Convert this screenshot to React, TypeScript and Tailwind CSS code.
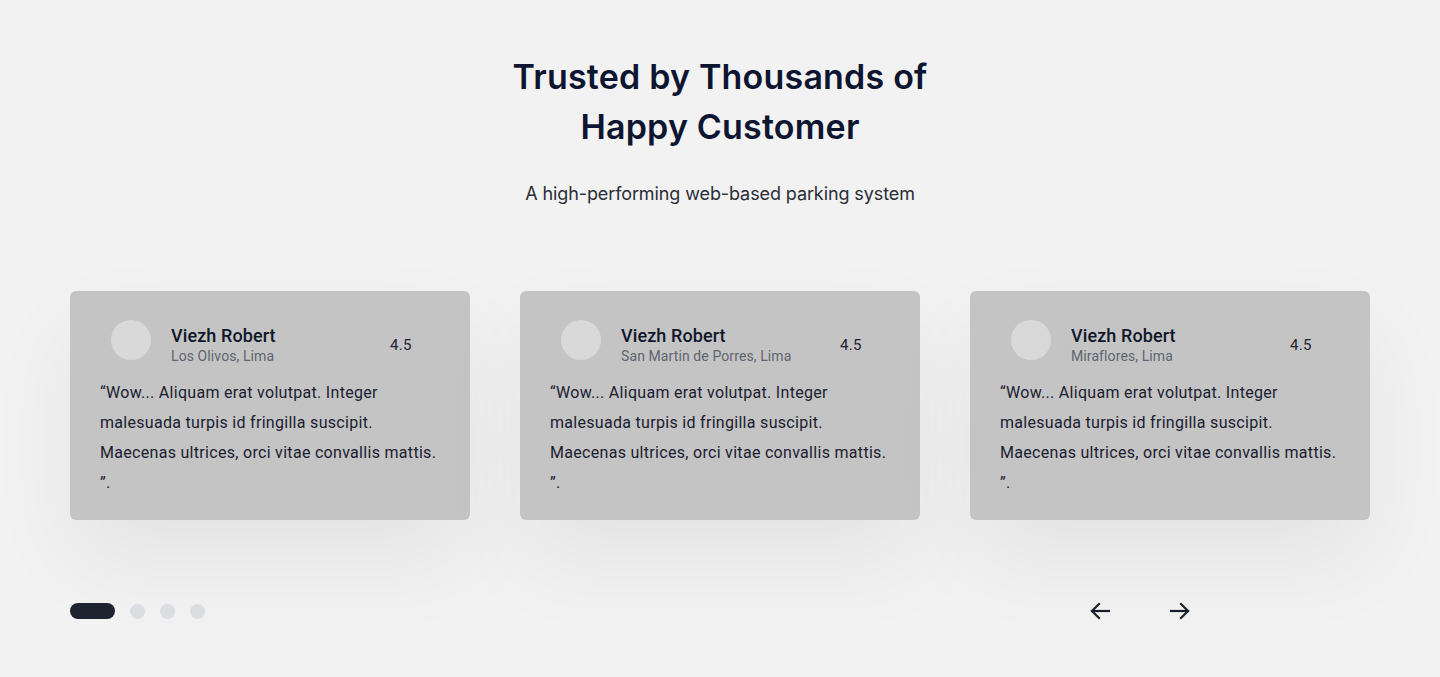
const reviews = [
  { name: "Viezh Robert", place: "Los Olivos, Lima", rating: "4.5" },
  { name: "Viezh Robert", place: "San Martin de Porres, Lima", rating: "4.5" },
  { name: "Viezh Robert", place: "Miraflores, Lima", rating: "4.5" },
];

function Arrow({ flip }: { flip?: boolean }) {
  return (
    <svg width="20" height="18" viewBox="0 0 20 18" fill="none" stroke="#1a1f2c" strokeWidth="2.2" strokeLinecap="square"
      className={flip ? "-scale-x-100" : ""}>
      <path d="M2 9H19" />
      <path d="M9 2L2 9L9 16" />
    </svg>
  );
}

function ReviewCard({ name, place, rating }: { name: string; place: string; rating: string }) {
  return (
    <div className="h-[229px] rounded-md bg-[#c4c4c4] pl-[30px] pr-[30px] pt-[29px] shadow-[0_40px_90px_rgba(0,0,0,0.06)]">
      <div className="flex items-start">
        <div className="ml-[11px] h-10 w-10 shrink-0 rounded-full bg-[#d9d9d9]" />
        <div className="ml-5 mt-[5px] w-[219px]">
          <p className="text-[18px] font-medium leading-[22px] tracking-[0.1px] text-[#0f172a]">{name}</p>
          <p className="text-[14px] leading-[18px] tracking-[0.1px] text-[#5f6470]">{place}</p>
        </div>
        <span className="mt-[14px] text-[15px] leading-[22px] tracking-[0.3px] text-[#1e2330]">{rating}</span>
      </div>
      <p className="mt-[13px] w-[345px] text-[16px] leading-[30px] tracking-[0.3px] text-[#1b2030]">
        “Wow... Aliquam erat volutpat. Integer malesuada turpis id fringilla suscipit. Maecenas ultrices, orci vitae convallis mattis. ”.
      </p>
    </div>
  );
}

export default function App() {
  return (
    <div className="min-h-[677px] w-full bg-[#f2f2f2] pt-[52px]" style={{ fontFamily: "Roboto, sans-serif" }}>
      <div className="text-center" style={{ fontFamily: "Inter, sans-serif" }}>
        <h1 className="mx-auto w-[470px] text-[34px] font-semibold leading-[50px] tracking-[0.2px] text-[#0d1530]">
          Trusted by Thousands of Happy Customer
        </h1>
        <p className="mt-[28px] text-[18px] leading-[28px] tracking-[-0.1px] text-[#2a2d36]">
          A high-performing web-based parking system
        </p>
      </div>

      <div className="mt-[83px] grid grid-cols-3 gap-[50px] px-[70px]">
        {reviews.map((r, i) => (
          <ReviewCard key={i} {...r} />
        ))}
      </div>

      <div className="mt-[82px] flex items-center px-[70px]">
        <div className="flex items-center gap-[15px]">
          <span className="h-4 w-[45px] rounded-full bg-[#1e2330]" />
          <span className="h-[15px] w-[15px] rounded-full bg-[#dadde2]" />
          <span className="h-[15px] w-[15px] rounded-full bg-[#dadde2]" />
          <span className="h-[15px] w-[15px] rounded-full bg-[#dadde2]" />
        </div>
        <div className="ml-[885px] flex items-center gap-[60px]">
          <Arrow />
          <Arrow flip />
        </div>
      </div>
    </div>
  );
}
